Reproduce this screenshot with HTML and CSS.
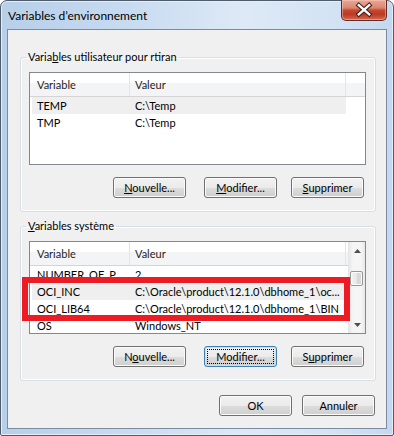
FILE: index.html
```html
<!DOCTYPE html>
<html lang="fr">
    <head>
        <meta charset="UTF-8">
        <meta name="viewport" content="width=device-width, initial-scale=1.0">
        <title>Variables d'environnement</title>
        <link rel="stylesheet" href="styles.css">
    </head>
    <body>
        <div class="window">
            <div class="titlebar">
                <span class="title">Variables d’environnement</span>
                <button type="button" class="close" aria-label="Fermer">
                    <svg width="46" height="20" viewBox="0 0 46 20">
                        <path d="M17.5 5 L28.5 14.5 M28.5 5 L17.5 14.5" stroke="#47201a" stroke-width="4.6" stroke-linecap="square"/>
                        <path d="M17.5 5 L28.5 14.5 M28.5 5 L17.5 14.5" stroke="#ffffff" stroke-width="2.4" stroke-linecap="square"/>
                    </svg>
                </button>
            </div>

            <div class="client">
                <!-- user variables -->
                <fieldset class="group">
                    <legend>Varia<u>b</u>les utilisateur pour rtiran</legend>
                    <div class="list">
                        <div class="list-main">
                            <div class="list-head">
                                <span class="col-var">Variable</span>
                                <span class="col-val">Valeur</span>
                                <span class="col-fill"></span>
                            </div>
                            <div class="list-body">
                                <div class="row row-hot"><span class="cell-var">TEMP</span><span class="cell-val">C:\Temp</span></div>
                                <div class="row"><span class="cell-var">TMP</span><span class="cell-val">C:\Temp</span></div>
                            </div>
                        </div>
                    </div>
                    <div class="buttons">
                        <button type="button" class="btn btn-first"><u>N</u>ouvelle...</button>
                        <button type="button" class="btn"><u>M</u>odifier...</button>
                        <button type="button" class="btn"><u>S</u>upprimer</button>
                    </div>
                </fieldset>

                <!-- system variables -->
                <fieldset class="group group-system">
                    <legend><u>V</u>ariables système</legend>
                    <div class="list">
                        <div class="list-main">
                            <div class="list-head">
                                <span class="col-var">Variable</span>
                                <span class="col-val">Valeur</span>
                                <span class="col-fill"></span>
                            </div>
                            <div class="list-body">
                                <div class="row"><span class="cell-var">NUMBER_OF_P...</span><span class="cell-val">2</span></div>
                                <div class="row row-hot"><span class="cell-var">OCI_INC</span><span class="cell-val">C:\Oracle\product\12.1.0\dbhome_1\oc...</span></div>
                                <div class="row"><span class="cell-var">OCI_LIB64</span><span class="cell-val">C:\Oracle\product\12.1.0\dbhome_1\BIN</span></div>
                                <div class="row"><span class="cell-var">OS</span><span class="cell-val">Windows_NT</span></div>
                            </div>
                        </div>
                        <div class="scrollbar">
                            <div class="arrow">
                                <svg width="7" height="4" viewBox="0 0 7 4"><path d="M0 4 L3.5 0 L7 4 Z" fill="#505050"/></svg>
                            </div>
                            <div class="track"><div class="thumb"></div></div>
                            <div class="arrow">
                                <svg width="7" height="4" viewBox="0 0 7 4"><path d="M0 0 L7 0 L3.5 4 Z" fill="#505050"/></svg>
                            </div>
                        </div>
                        <div class="highlight"></div>
                    </div>
                    <div class="buttons">
                        <button type="button" class="btn btn-first">N<u>o</u>uvelle...</button>
                        <button type="button" class="btn btn-focus">Modifier...</button>
                        <button type="button" class="btn">S<u>u</u>pprimer</button>
                    </div>
                </fieldset>

                <div class="dialog-buttons">
                    <button type="button" class="btn">OK</button>
                    <button type="button" class="btn">Annuler</button>
                </div>
            </div>
        </div>
    </body>
</html>
```

FILE: styles.css
```css
*{
    margin: 0;
    padding: 0;
    box-sizing: border-box;
}
body{
    background-color: #ffffff;
    font-family: Lato, "Noto Sans", sans-serif;
    font-size: 11px;
    color: #000000;
}

/* window frame */
.window{
    width: 394px;
    height: 436px;
    display: flex;
    flex-direction: column;
    border: 1px solid #4f5c6c;
    border-radius: 7px 7px 2px 2px;
    background: linear-gradient(to right, #b7cfe9 0%, #c6daf0 30%, #dde9f6 62%, #d3e3f4 85%, #c3d8ef 100%);
    box-shadow: inset 0 0 0 1px #e4eef9;
}
.titlebar{
    height: 28px;
    display: flex;
    justify-content: space-between;
    align-items: flex-start;
    padding: 0 6px 0 7px;
}
.title{
    padding-top: 7px;
    line-height: 16px;
    font-size: 12px;
}
.close{
    width: 46px;
    height: 21px;
    margin-top: -1px;
    border: 1px solid #5e2c24;
    border-top: none;
    border-radius: 0 0 5px 5px;
    background: linear-gradient(#e9a796 0%, #dc8670 40%, #c74a33 50%, #bb3a24 72%, #d7694f 100%);
    box-shadow: inset 0 0 0 1px rgba(255, 210, 200, 0.45);
    display: flex;
    align-items: center;
    justify-content: center;
}
.close svg{
    display: block;
}

/* dialog body */
.client{
    height: 400px;
    margin: 0 6px;
    border: 1px solid #7b8ba0;
    background-color: #f0f0f0;
    padding: 19px 10px 12px 12px;
    display: flex;
    flex-direction: column;
}
.group{
    border: 1px solid #d5dfe5;
    border-radius: 3px;
    padding: 7px 9px 13px 8px;
    box-shadow: inset 0 0 0 1px #ffffff;
}
.group-system{
    margin-top: 6px;
}
legend{
    margin-left: -3px;
    padding: 0 2px;
    line-height: 16px;
}

/* list views */
.list{
    position: relative;
    height: 93px;
    display: flex;
    border: 1px solid #828790;
    background-color: #ffffff;
}
.list-main{
    flex: 1;
    min-width: 0;
    display: flex;
    flex-direction: column;
}
.list-head{
    display: flex;
    height: 24px;
    line-height: 23px;
    border-bottom: 1px solid #d5d5d5;
    background: linear-gradient(#ffffff 0%, #ffffff 42%, #f3f4f6 42%, #f3f4f6 100%);
    color: #1e1e1e;
}
.col-var{
    width: 100px;
    padding-left: 7px;
    border-right: 1px solid #e3e5e8;
}
.col-val{
    width: 216px;
    padding-left: 5px;
    border-right: 1px solid #e3e5e8;
}
.col-fill{
    flex: 1;
}
.list-body{
    flex: 1;
    overflow: hidden;
}
.row{
    display: flex;
    height: 17px;
    line-height: 17px;
    margin-left: 2px;
    width: 314px;
    white-space: nowrap;
}
.row-hot{
    background-color: #efefef;
}
.cell-var{
    width: 98px;
    padding-left: 5px;
    overflow: hidden;
}
.cell-val{
    width: 216px;
    padding-left: 5px;
    overflow: hidden;
}

.scrollbar{
    width: 17px;
    display: flex;
    flex-direction: column;
    border-left: 1px solid #e6e6e6;
    background: linear-gradient(to right, #e8e8e8 0%, #f5f5f5 25%, #f5f5f5 75%, #e8e8e8 100%);
}
.arrow{
    height: 17px;
    display: flex;
    align-items: center;
    justify-content: center;
}
.arrow svg{
    display: block;
}
.track{
    flex: 1;
}
.thumb{
    width: 13px;
    height: 15px;
    margin: 12px 0 0 1px;
    border: 1px solid #979797;
    border-radius: 2px;
    background: linear-gradient(to right, #f3f3f3 0%, #e8e8e8 50%, #d6d6d6 50%, #dcdcdc 100%);
    box-shadow: inset 0 0 0 1px #fbfbfb;
}

/* red annotation drawn over the system list */
.highlight{
    position: absolute;
    left: -8px;
    top: 35px;
    width: 328px;
    height: 44px;
    border: 6px solid #ed1c24;
}

/* buttons */
.buttons{
    display: flex;
    justify-content: flex-end;
    gap: 14px;
    margin: 12px 2px 0 0;
}
.btn-first{
    margin-right: 4px;
}
.btn{
    position: relative;
    width: 73px;
    height: 21px;
    border: 1px solid #707070;
    border-radius: 3px;
    background: linear-gradient(#f2f2f2 0%, #ebebeb 50%, #dddddd 50%, #cfcfcf 100%);
    box-shadow: inset 0 0 0 1px #fbfbfb;
    font-family: Lato, "Noto Sans", sans-serif;
    font-size: 11px;
    line-height: 17px;
    color: #000000;
}
.btn-focus{
    border-color: #3c7fb1;
    box-shadow: inset 0 0 0 1px #bfe4f8;
}
.btn-focus::after{
    content: "";
    position: absolute;
    inset: 2px;
    border: 1px dotted #000000;
}
.dialog-buttons{
    margin-top: auto;
    display: flex;
    justify-content: flex-end;
    gap: 10px;
    margin-right: 1px;
}
```
